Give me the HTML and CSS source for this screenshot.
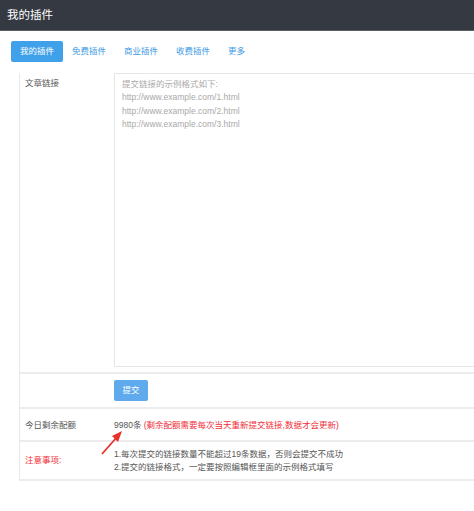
FILE: index.html
```html
<!DOCTYPE html>
<html lang="zh">
<head>
<meta charset="utf-8">
<link rel="stylesheet" href="styles.css">
</head>
<body>
<div class="header">我的插件</div>
<div class="tabs">
  <span class="tab active">我的插件</span>
  <span class="tab">免费插件</span>
  <span class="tab">商业插件</span>
  <span class="tab">收费插件</span>
  <span class="tab">更多</span>
</div>
<div class="panel">
  <div class="row row-links">
    <div class="label">文章链接</div>
    <div class="field">
      <div class="textarea">
        <div>提交链接的示例格式如下:</div>
        <div>http://www.example.com/1.html</div>
        <div>http://www.example.com/2.html</div>
        <div>http://www.example.com/3.html</div>
      </div>
    </div>
  </div>
  <div class="row row-btn">
    <div class="label"></div>
    <div class="field"><span class="btn">提交</span></div>
  </div>
  <div class="row row-quota">
    <div class="label">今日剩余配额</div>
    <div class="field">9980条 <span class="red">(剩余配额需要每次当天重新提交链接,数据才会更新)</span></div>
  </div>
  <div class="row row-notice">
    <div class="label red">注意事项:</div>
    <div class="field">
      <div>1.每次提交的链接数量不能超过19条数据，否则会提交不成功</div>
      <div>2.提交的链接格式，一定要按照编辑框里面的示例格式填写</div>
    </div>
  </div>
  <svg class="arrow" width="30" height="30" viewBox="0 0 30 30">
    <line x1="3" y1="26" x2="18" y2="9" stroke="#e8312a" stroke-width="1.8"/>
    <polygon points="23,3 13,8 19,14" fill="#e8312a"/>
  </svg>
</div>
</body>
</html>
```
FILE: styles.css
```css
* { box-sizing: border-box; }
html, body { margin: 0; padding: 0; background: #fff; }
body {
  font-family: "Liberation Sans", "Noto Sans CJK SC", sans-serif;
  font-size: 8.5px;
  color: #555;
}
.header {
  height: 31px;
  line-height: 31px;
  background: #353a42;
  color: #fff;
  font-size: 11.5px;
  padding-left: 7px;
  border-bottom: 1px solid #5c6066;
}
.tabs {
  display: flex;
  margin-top: 10px;
  padding-left: 11px;
}
.tab {
  height: 21px;
  line-height: 21px;
  padding: 0 9px;
  color: #3d9be3;
  border-radius: 2px;
}
.tab.active {
  background: #3fa1ea;
  color: #fff;
}
.panel {
  position: relative;
  margin: 11px 0 0 19px;
  border-left: 1px solid #e9e9e9;
  border-bottom: 2px solid #ececec;
  box-shadow: 0 3px 3px -2px #f2f2f2;
}
.row {
  display: flex;
  border-bottom: 2px solid #ececec;
}
.label {
  width: 94px;
  flex: none;
  padding-left: 5px;
  line-height: 13px;
  color: #555;
}
.field {
  flex: 1;
  line-height: 13px;
}
.row-links { height: 301px; }
.row-links .label { padding-top: 4px; }
.row-links .field { padding-bottom: 5px; }
.textarea {
  height: 100%;
  border: 1px solid #e6e6e6;
  border-right: none;
  padding: 4px 7px;
  color: #a9a9a9;
  line-height: 13.3px;
}
.row-btn { height: 35px; }
.row-btn .field { padding-top: 6px; }
.btn {
  display: inline-block;
  width: 34px;
  height: 21px;
  line-height: 21px;
  text-align: center;
  background: #5eaaec;
  color: #fff;
  border-radius: 2px;
}
.row-quota { height: 33px; align-items: center; }
.row-quota .label, .row-quota .field { padding-top: 1px; }
.row-notice { height: 37px; align-items: center; border-bottom: none; }
.red { color: #f0303a; }
.arrow {
  position: absolute;
  left: 79px;
  top: 355px;
}
```
